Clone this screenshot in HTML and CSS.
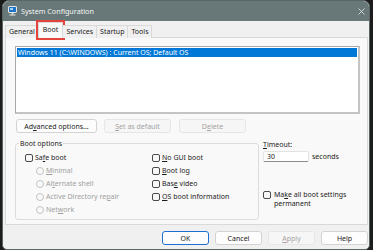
FILE: index.html
```html
<!DOCTYPE html>
<html lang="en">
<head>
    <meta charset="UTF-8">
    <title>System Configuration</title>
<link rel="stylesheet" href="styles.css">
</head>
<body>
    <div class="window">
        <div class="titlebar">
            <svg class="app-icon" width="9" height="10" viewBox="0 0 9 10">
                <rect x="0.5" y="0.5" width="8" height="6" rx="0.5" fill="#1f74c9" stroke="#e6e6e6"/>
                <rect x="2" y="2" width="3" height="2" fill="#9fd0ff"/>
                <rect x="3.5" y="7" width="2" height="1.5" fill="#d8d8d8"/>
                <rect x="1.5" y="8.5" width="6" height="1" fill="#e6e6e6"/>
            </svg>
            <span class="title">System Configuration</span>
            <svg class="close" width="7" height="7" viewBox="0 0 7 7">
                <path d="M0.5 0.5 L6.5 6.5 M6.5 0.5 L0.5 6.5" stroke="#e4e8e8" stroke-width="0.8"/>
            </svg>
        </div>

        <div class="tabs">
            <div class="tab">General</div>
            <div class="tab active">Boot</div>
            <div class="tab">Services</div>
            <div class="tab">Startup</div>
            <div class="tab">Tools</div>
        </div>

        <div class="panel">
            <div class="listbox">
                <div class="list-item selected">Windows 11 (C:\WINDOWS) : Current OS; Default OS</div>
            </div>

            <div class="list-buttons">
                <button class="btn btn-advanced">Ad<u>v</u>anced options...</button>
                <button class="btn btn-mid" disabled><u>S</u>et as default</button>
                <button class="btn btn-mid" disabled>D<u>e</u>lete</button>
            </div>

            <div class="lower">
                <fieldset class="group">
                    <legend>Boot options</legend>
                    <div class="group-cols">
                        <div class="col col-left">
                            <div class="row"><span class="box"></span><span>Sa<u>f</u>e boot</span></div>
                            <div class="row sub disabled"><span class="radio"></span><span><u>M</u>inimal</span></div>
                            <div class="row sub disabled"><span class="radio"></span><span>Al<u>t</u>ernate shell</span></div>
                            <div class="row sub disabled"><span class="radio"></span><span>Active Directory re<u>p</u>air</span></div>
                            <div class="row sub disabled"><span class="radio"></span><span>Net<u>w</u>ork</span></div>
                        </div>
                        <div class="col">
                            <div class="row"><span class="box"></span><span><u>N</u>o GUI boot</span></div>
                            <div class="row"><span class="box"></span><span><u>B</u>oot log</span></div>
                            <div class="row"><span class="box"></span><span>Bas<u>e</u> video</span></div>
                            <div class="row"><span class="box"></span><span><u>O</u>S boot information</span></div>
                        </div>
                    </div>
                </fieldset>

                <div class="side">
                    <div class="side-label"><u>T</u>imeout:</div>
                    <div class="timeout">
                        <div class="textbox">30</div>
                        <span>seconds</span>
                    </div>
                    <div class="permanent">
                        <span class="box"></span>
                        <div class="permanent-text">Ma<u>k</u>e all boot settings<br>permanent</div>
                    </div>
                </div>
            </div>
        </div>

        <div class="footer">
            <button class="btn btn-foot btn-default">OK</button>
            <button class="btn btn-foot">Cancel</button>
            <button class="btn btn-foot" disabled><u>A</u>pply</button>
            <button class="btn btn-foot">Help</button>
        </div>
    </div>
</body>
</html>
```

FILE: styles.css
```css
body {
    margin: 0;
    background-color: #1c1c1c;
    font-family: "Noto Sans", "Liberation Sans", sans-serif;
    font-size: 7px;
    color: #1b1b1b;
}

.window {
    margin-left: 2px;
    width: 366px;
    height: 248px;
    border: 1px solid #5b6565;
    border-radius: 7px 7px 5px 5px;
    background: #f0f0f0;
    overflow: hidden;
    display: flex;
    flex-direction: column;
}

/* Title bar */
.titlebar {
    height: 20px;
    flex-shrink: 0;
    background: #687878;
    display: flex;
    align-items: center;
    padding: 0 3px 0 5px;
}

.app-icon {
    margin-right: 4px;
}

.title {
    color: #f4f6f6;
    font-size: 7.2px;
}

.close {
    margin-left: auto;
    margin-right: 1px;
}

/* Tabs */
.tabs {
    display: flex;
    align-items: flex-end;
    height: 16px;
    margin: 1px 0 0 2px;
    position: relative;
    z-index: 2;
}

.tab {
    height: 13px;
    line-height: 12px;
    padding: 0 3px;
    border: 1px solid #d9d9d9;
    border-bottom: none;
    border-right: none;
    box-sizing: border-box;
    background: #f0f0f0;
}

.tab:last-child {
    border-right: 1px solid #d9d9d9;
}

.tab.active {
    height: 16px;
    line-height: 14px;
    padding: 0 4px;
    border-right: 1px solid #d9d9d9;
    background: #f9f9f9;
    outline: 2px solid #e5443c;
    outline-offset: 0;
}

.tab.active + .tab {
    border-left: none;
}

/* Panel */
.panel {
    margin: -1px 1px 0 2px;
    height: 188px;
    box-sizing: border-box;
    border: 1px solid #d9d9d9;
    background: #f9f9f9;
    padding: 8px 7px 0 9px;
}

.listbox {
    height: 68px;
    box-sizing: border-box;
    background: #ffffff;
    border: 1px solid #a9a9a9;
    border-right: 2px solid #c4c4c4;
    border-bottom: 2px solid #c4c4c4;
    padding: 1px;
}

.list-item {
    height: 9px;
    line-height: 9px;
    padding-left: 1px;
}

.list-item.selected {
    background: #0078d7;
    color: #ffffff;
}

.list-buttons {
    display: flex;
    margin-top: 5px;
}

.btn {
    height: 14px;
    box-sizing: border-box;
    padding: 0;
    font-family: inherit;
    font-size: 7px;
    color: #1b1b1b;
    background: #fdfdfd;
    border: 1px solid #d3d3d3;
    border-radius: 3px;
}

.btn:disabled {
    color: #a3a3a3;
    background: #f6f6f6;
    border-color: #e6e6e6;
}

.btn-advanced {
    width: 81px;
    margin-left: 1px;
}

.btn-mid {
    width: 67px;
    margin-left: 7px;
}

.btn-mid + .btn-mid {
    margin-left: 8px;
}

/* Boot options */
.lower {
    display: flex;
    margin-top: 6px;
}

.group {
    width: 244px;
    height: 81px;
    box-sizing: border-box;
    margin: 0;
    padding: 0;
    border: 1px solid #dcdcdc;
    border-radius: 3px;
}

.group legend {
    margin-left: 3px;
    padding: 0 1px;
    line-height: 9px;
}

.group-cols {
    display: flex;
    padding: 3px 0 0 9px;
}

.col-left {
    width: 127px;
}

.row {
    height: 13px;
    display: flex;
    align-items: center;
}

.row.sub {
    padding-left: 11px;
}

.row.disabled {
    color: #a0a0a0;
}

.box {
    width: 8px;
    height: 8px;
    box-sizing: border-box;
    border: 1px solid #4a4a4a;
    border-radius: 2px;
    background: #f7f7f7;
    margin-right: 2px;
    flex-shrink: 0;
}

.radio {
    width: 8px;
    height: 8px;
    box-sizing: border-box;
    border: 1px solid #c2c2c2;
    border-radius: 50%;
    margin-right: 2px;
    flex-shrink: 0;
}

.side {
    margin-left: 4px;
    padding-top: 1px;
}

.side-label {
    line-height: 9px;
}

.timeout {
    display: flex;
    align-items: center;
    margin-top: 2px;
}

.textbox {
    width: 46px;
    height: 11px;
    box-sizing: border-box;
    line-height: 10px;
    padding-left: 3px;
    background: #ffffff;
    border: 1px solid #e3e3e3;
    border-bottom-color: #8c8c8c;
    border-radius: 2px;
    margin-right: 3px;
}

.permanent {
    display: flex;
    align-items: flex-start;
    margin-top: 28px;
}

.permanent .box {
    margin-top: 1px;
    margin-right: 3px;
}

.permanent-text {
    line-height: 9px;
}

/* Dialog buttons */
.footer {
    display: flex;
    justify-content: flex-end;
    gap: 6px;
    padding: 6px 1px 0 0;
}

.btn-foot {
    width: 47px;
}

.btn-default {
    border-color: #1d6fd1;
}
```
